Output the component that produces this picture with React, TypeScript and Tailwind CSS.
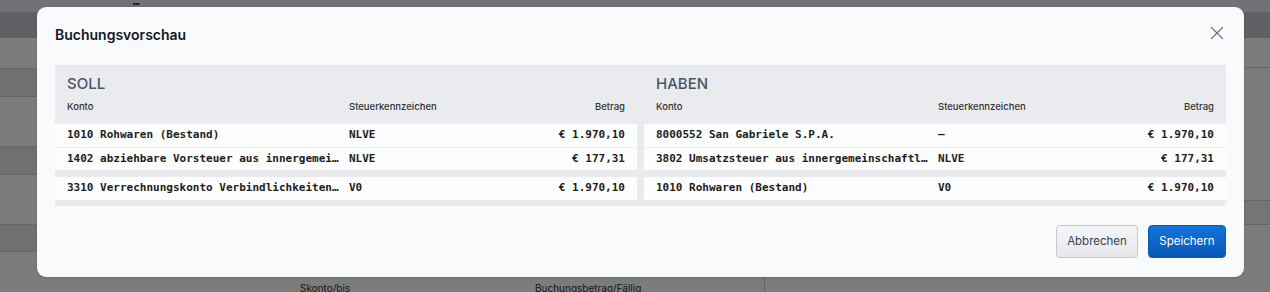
import React from "react";

type Line = {
  konto: string;
  steuer: string;
  betrag: string;
};

const soll: Line[][] = [
  [
    { konto: "1010 Rohwaren (Bestand)", steuer: "NLVE", betrag: "€ 1.970,10" },
    {
      konto: "1402 abziehbare Vorsteuer aus innergemeinschaftlichem Erwerb",
      steuer: "NLVE",
      betrag: "€ 177,31",
    },
  ],
  [
    {
      konto: "3310 Verrechnungskonto Verbindlichkeiten aus Lieferungen",
      steuer: "V0",
      betrag: "€ 1.970,10",
    },
  ],
];

const haben: Line[][] = [
  [
    { konto: "8000552 San Gabriele S.P.A.", steuer: "–", betrag: "€ 1.970,10" },
    {
      konto: "3802 Umsatzsteuer aus innergemeinschaftlichem Erwerb",
      steuer: "NLVE",
      betrag: "€ 177,31",
    },
  ],
  [{ konto: "1010 Rohwaren (Bestand)", steuer: "V0", betrag: "€ 1.970,10" }],
];

const sans = "font-['Inter','Noto_Sans',sans-serif]";
const mono = "font-['DejaVu_Sans_Mono','Liberation_Mono',monospace]";

const Side: React.FC<{ title: string; groups: Line[][] }> = ({ title, groups }) => (
  <div className="flex-1 flex flex-col min-w-0">
    <div className="px-3 pt-[9px] pb-[10px]">
      <div className={`${sans} text-[15px] leading-[20px] font-medium text-[#4b5563]`}>
        {title}
      </div>
      <div
        className={`${sans} mt-[6px] grid grid-cols-[282px_1fr_auto] text-[9.5px] leading-[14px] font-medium text-[#333]`}
      >
        <span>Konto</span>
        <span>Steuerkennzeichen</span>
        <span className="text-right">Betrag</span>
      </div>
    </div>

    <div className="flex flex-col gap-[7px] pb-[6px]">
      {groups.map((group, gi) => (
        <div key={gi} className="bg-[#fdfdfe]">
          {group.map((line, li) => (
            <div
              key={li}
              className={`${mono} grid grid-cols-[282px_1fr_auto] items-center px-3 text-[11px] font-bold text-[#1c1c1c] ${
                li === 0 ? "h-[23px]" : "h-[23px] border-t border-[#eceef1] box-border"
              }`}
            >
              <span className="truncate pr-[6px]">{line.konto}</span>
              <span>{line.steuer}</span>
              <span className="text-right">{line.betrag}</span>
            </div>
          ))}
        </div>
      ))}
    </div>
  </div>
);

const App: React.FC = () => {
  return (
    <div className="relative h-[292px] w-full overflow-hidden bg-[#f6f8f8]">
      {/* page behind the dialog */}
      <div className={`${mono} h-[12px] bg-[#e0e4ea] flex items-end overflow-hidden text-[11px] font-bold text-[#222]`}>
        <div className="flex leading-[16px] mb-[2px]">
          <span className="ml-[24px] w-[109px]">02-11-2024</span>
          <span className="w-[157px]">3310 Verrechnungskonto …</span>
          <span className="w-[165px]">1010 Rohwaren (Bestand)</span>
          <span className="w-[242px]">19 Rot B10, Cldo - 1990.000000…</span>
          <span className="w-[178px]">€ 1 970,10</span>
          <span className="w-[317px]">€ 1 970,10</span>
          <span className="mt-[2px] w-[9px] h-[9px] border border-[#333] rounded-[2px]" />
        </div>
      </div>
      <div className="h-[26px] bg-[#bec0c8]" />
      <div className="flex">
        <div className="w-[765px] border-r border-[#c8c8c8] flex flex-col">
          <div className="h-[31px] border-b border-[#cccccc]" />
          <div className="h-[28px] bg-[#dee0e0] border-b border-[#cccccc]" />
          <div className="h-[50px] border-b border-[#cccccc]" />
          <div className="h-[28px] bg-[#dee0e0] border-b border-[#cccccc]" />
          <div className="h-[50px] border-b border-[#cccccc]" />
          <div className="h-[27px] bg-[#dee0e0] border-b border-[#cccccc]" />
          <div className={`${sans} h-[50px] flex items-start pt-[30px] text-[10px] leading-[12px] text-[#333]`}>
            <span className="ml-[300px] w-[235px]">Skonto/bis</span>
            <span>Buchungsbetrag/Fällig</span>
          </div>
        </div>
        <div className="flex-1 flex flex-col">
          <div className="h-[30px] border-b border-[#cccccc]" />
          <div className="h-[133px] border-b border-[#cccccc]" />
          <div className="h-[24px] bg-[#e8eaea] border-b border-[#cccccc]" />
          <div className="h-[80px]" />
        </div>
      </div>

      {/* overlay */}
      <div className="absolute inset-0 bg-black/50" />

      {/* dialog */}
      <div className="absolute left-[37px] top-[7px] w-[1207px] rounded-[9px] bg-[#f9fafb] px-[18px] pt-[18px] pb-[19px] shadow-sm">
        <div className="flex items-center justify-between">
          <h2 className={`${sans} text-[14px] leading-[20px] font-semibold text-[#111827]`}>
            Buchungsvorschau
          </h2>
          <button className="mr-[2px] -mt-[4px] text-[#6b7280]">
            <svg width="14" height="14" viewBox="0 0 14 14" fill="none">
              <path d="M1.5 1.5 12.5 12.5M12.5 1.5 1.5 12.5" stroke="currentColor" strokeWidth="1.2" strokeLinecap="round" />
            </svg>
          </button>
        </div>

        <div className="mt-[20px] flex gap-[7px] bg-[#e9ebee]">
          <Side title="SOLL" groups={soll} />
          <Side title="HABEN" groups={haben} />
        </div>

        <div className="mt-[19px] flex justify-end gap-[10px]">
          <button
            className={`${sans} h-[33px] w-[82px] rounded-[4px] border border-[#c3c8d0] bg-gradient-to-b from-[#f5f6f8] to-[#e6e8ec] text-[11.5px] text-[#374151]`}
          >
            Abbrechen
          </button>
          <button
            className={`${sans} h-[33px] w-[78px] rounded-[4px] border border-[#0a5ab8] bg-gradient-to-b from-[#1273dc] to-[#0a59b6] text-[11.5px] text-white`}
          >
            Speichern
          </button>
        </div>
      </div>
    </div>
  );
};

export default App;
